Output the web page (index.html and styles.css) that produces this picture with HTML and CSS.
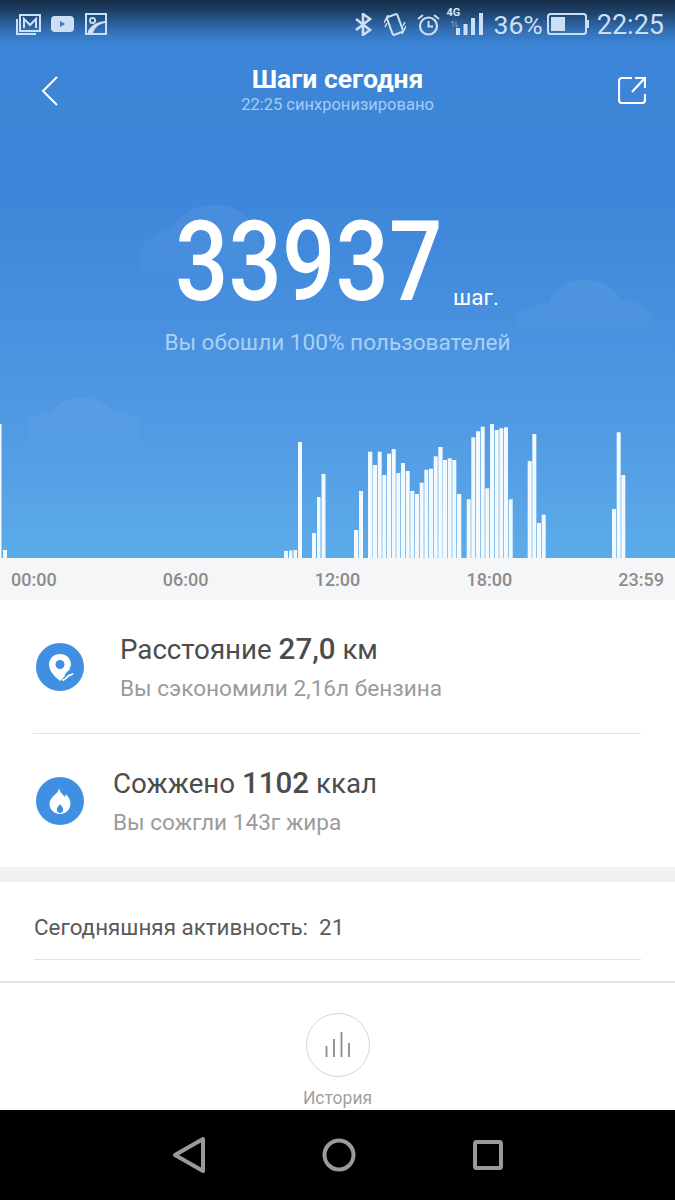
FILE: index.html
```html
<!DOCTYPE html>
<html lang="ru">
<head>
<meta charset="utf-8">
<title>Шаги сегодня</title>
<link rel="stylesheet" href="styles.css">
</head>
<body>
<div class="phone">
  <section class="hero">
    <svg class="clouds" viewBox="0 0 675 558" aria-hidden="true">
      <defs>
        <linearGradient id="cloudFade" x1="0" y1="0" x2="0" y2="1">
          <stop offset="0" stop-color="#fff" stop-opacity=".06"/>
          <stop offset=".55" stop-color="#fff" stop-opacity=".03"/>
          <stop offset="1" stop-color="#fff" stop-opacity="0"/>
        </linearGradient>
      </defs>
      <path class="cloud" d="M140 290V258c0-14 12-26 30-28 8-15 24-25 44-25 20 0 36 10 42 27 3 6 7 14 7 26v32z"/>
      <path class="cloud" d="M517 340V322c0-10 12-18 32-19 5-14 18-23 35-23 17 0 30 8 37 20 20 1 34 10 34 24v16z"/>
      <path class="cloud" d="M28 448V426c0-7 10-13 24-14 5-8 15-14 30-14 14 0 25 6 30 13 16 1 28 7 28 15v22z"/>
    </svg>

    <div class="status">
      <div class="status-group">
        <svg class="si" width="25" height="22" viewBox="0 0 25 22"><path d="M4 2h20v16H4z" fill="none" stroke="currentColor" stroke-width="2"/><path d="M8 15V6l6 6 6-6v9" fill="none" stroke="currentColor" stroke-width="2"/><path d="M1 6v15h19" fill="none" stroke="currentColor" stroke-width="2"/></svg>
        <svg class="si si-yt" width="23" height="16" viewBox="0 0 23 16"><rect width="23" height="16" rx="4" fill="currentColor"/><path d="M9 5l5 3-5 3z" fill="#3b78b8"/></svg>
        <svg class="si si-pic" width="22" height="22" viewBox="0 0 22 22"><rect x="1" y="1" width="20" height="20" fill="none" stroke="currentColor" stroke-width="2"/><circle cx="7.500" cy="7.500" r="2.600" fill="none" stroke="currentColor" stroke-width="1.800"/><path d="M3 18C7 11 13 9 20 8v2C14 11 10 14 8 20H3z" fill="currentColor"/></svg>
      </div>
      <div class="status-group status-right">
        <svg width="19" height="23" viewBox="0 0 19 23"><path d="M2 6l14 11-7 5V1l7 5L2 17" fill="none" stroke="currentColor" stroke-width="2.600"/></svg>
        <svg class="si-vib" width="22" height="23" viewBox="0 0 22 23"><rect x="5.500" y="2" width="11" height="19" rx="1.500" transform="rotate(-20 11 11.500)" fill="none" stroke="currentColor" stroke-width="2"/><path d="M0 10l4-8M1 14l2-4M18 21l4-8M19 13l2-4" stroke="currentColor" stroke-width="1.500" fill="none"/></svg>
        <svg class="si-alarm" width="23" height="23" viewBox="0 0 23 23"><circle cx="11.500" cy="13" r="8.500" fill="none" stroke="currentColor" stroke-width="2.200"/><path d="M11.500 8v5.500H16M1 6l5-4M22 6l-5-4" fill="none" stroke="currentColor" stroke-width="2"/></svg>
        <div class="signal">
          <span class="net">4G</span>
          <svg width="27" height="22" viewBox="0 0 27 22"><path d="M-3 14V8l-2 2M0 8v6l2-2" fill="none" stroke="currentColor" stroke-width="1" opacity=".5"/><rect x="0" y="15" width="4" height="7" fill="currentColor"/><rect x="7.500" y="11" width="4" height="11" fill="currentColor"/><rect x="15" y="5" width="4" height="17" fill="currentColor"/><rect x="23" y="0" width="4" height="22" fill="currentColor"/></svg>
        </div>
        <span class="pct">36%</span>
        <svg class="batt" width="42" height="22" viewBox="0 0 42 22"><rect x="1" y="1" width="38" height="20" rx="2.500" fill="none" stroke="currentColor" stroke-width="2"/><rect x="4" y="4" width="14" height="14" fill="currentColor"/><rect x="40" y="7" width="2" height="8" fill="currentColor"/></svg>
        <span class="clock">22:25</span>
      </div>
    </div>

    <header class="toolbar">
      <svg class="tool-icon" width="18" height="30" viewBox="0 0 18 30"><path d="M16 1L2 15l14 14" fill="none" stroke="#fff" stroke-width="2"/></svg>
      <div class="heading">
        <h1 class="title">Шаги сегодня</h1>
        <p class="sync">22:25 синхронизировано</p>
      </div>
      <svg class="tool-icon" width="28" height="28" viewBox="0 0 28 28"><path d="M14 2H4a3 3 0 0 0-3 3v19a3 3 0 0 0 3 3h20a3 3 0 0 0 3-3v-6" fill="none" stroke="#fff" stroke-width="2.200"/><path d="M14 16L26 3M17 2h10v10" fill="none" stroke="#fff" stroke-width="2.200"/></svg>
    </header>

    <div class="steps">
      <span class="steps-num">33937</span>
      <span class="steps-unit">шаг.</span>
    </div>
    <p class="rank">Вы обошли 100% пользователей</p>

    <svg class="chart" width="675" height="136" viewBox="0 422 675 136" aria-label="Шаги по времени">
      <g class="bars">
        <rect x="0" y="424" width="1.500" height="134"/><rect x="3" y="550" width="4" height="8"/>
        <rect x="284" y="551" width="4" height="7"/><rect x="289" y="550.500" width="3.500" height="7.500"/><rect x="293.500" y="550" width="3.500" height="8"/><rect x="298" y="442" width="4" height="116"/>
        <rect x="312" y="533" width="4" height="25"/><rect x="317" y="497" width="3.500" height="61"/><rect x="321.500" y="474" width="4" height="84"/>
        <rect x="354" y="530" width="4.300" height="28"/><rect x="359" y="491" width="4" height="67"/>
        <rect x="368" y="451.700" width="4.300" height="106.300"/><rect x="372.700" y="465" width="4.300" height="93"/><rect x="377.700" y="451.700" width="4" height="106.300"/><rect x="382.300" y="475" width="4" height="83"/>
        <rect x="387" y="453.700" width="4" height="104.300"/><rect x="391.700" y="449" width="4" height="109"/><rect x="396.300" y="473" width="4" height="85"/><rect x="401" y="463" width="4" height="95"/>
        <rect x="405.700" y="471" width="4" height="87"/><rect x="410.300" y="491" width="4" height="67"/><rect x="415" y="494" width="4" height="64"/><rect x="419.700" y="482.700" width="4" height="75.300"/>
        <rect x="424.300" y="469.700" width="4" height="88.300"/><rect x="429" y="468.700" width="4" height="89.300"/><rect x="433.700" y="456.300" width="4" height="101.700"/><rect x="438.300" y="447" width="4.300" height="111"/>
        <rect x="443" y="460" width="4" height="98"/><rect x="447.700" y="458.300" width="4" height="99.700"/><rect x="452.300" y="460" width="4" height="98"/><rect x="457" y="494" width="4.300" height="64"/>
        <rect x="466.700" y="499.300" width="4" height="58.700"/><rect x="471.300" y="437.300" width="4" height="120.700"/><rect x="476" y="431.300" width="4" height="126.700"/><rect x="480.700" y="426.700" width="4" height="131.300"/>
        <rect x="485.300" y="488.300" width="4" height="69.700"/><rect x="490" y="424" width="4" height="134"/><rect x="494.700" y="430" width="4" height="128"/><rect x="499.300" y="428.300" width="4" height="129.700"/>
        <rect x="504" y="427.300" width="4" height="130.700"/><rect x="508.700" y="499.300" width="4" height="58.700"/>
        <rect x="527.700" y="461" width="4" height="97"/><rect x="532.300" y="434" width="4" height="124"/><rect x="537" y="523" width="4" height="35"/><rect x="541.700" y="514.700" width="4" height="43.300"/>
        <rect x="612" y="509" width="4" height="49"/><rect x="616.700" y="432.300" width="4" height="125.700"/><rect x="621.300" y="475" width="4" height="83"/>
      </g>
    </svg>
  </section>

  <div class="axis">
    <span>00:00</span><span>06:00</span><span>12:00</span><span>18:00</span><span>23:59</span>
  </div>

  <section class="stats">
    <div class="stat">
      <svg class="stat-icon" width="48" height="48" viewBox="0 0 48 48">
        <circle cx="24" cy="24" r="24" fill="#3f8fe2"/>
        <path d="M24 11c-6.500 0-11 4.700-11 10.500C13 27.500 18 33 24 38c1.600-1.400 3-2.800 4.400-4.200 1.300-4.300 3-5.600 5-6.800 0-1.700 1.600-3.500 1.600-5.500C35 15.700 30.500 11 24 11z" fill="#fff"/>
        <circle cx="24" cy="21.500" r="4.500" fill="#3f8fe2"/>
        <path d="M27 37c3-.5 3.500-3.200 6-4.500 1.700-.9 2.500-.4 3.500-1.500" fill="none" stroke="#fff" stroke-width="1.800" stroke-linecap="round"/>
      </svg>
      <div class="stat-text">
        <p class="stat-main">Расстояние <b>27,0</b> км</p>
        <p class="stat-sub">Вы сэкономили 2,16л бензина</p>
      </div>
    </div>
    <div class="stat stat-burn">
      <svg class="stat-icon" width="48" height="48" viewBox="0 0 48 48">
        <circle cx="24" cy="24" r="24" fill="#3f8fe2"/>
        <path d="M23 11c1 4.500 4 6.500 6 9 .5-1 .8-2 .8-3 2.700 2.800 4.700 6 4.700 9.500C34.500 32.500 30 37 24 37s-10.500-4.500-10.500-10c0-3.800 2.200-6.300 4.500-8.500 2.300-2.200 5-4 5-7.500z" fill="#fff"/>
        <path d="M24 27c1 2 3.200 3 3.200 5.800 0 2-1.500 3.200-3.200 3.200s-3.200-1.200-3.200-3.200c0-2.600 2.200-3.800 3.200-5.800z" fill="#3f8fe2"/>
      </svg>
      <div class="stat-text">
        <p class="stat-main">Сожжено <b>1102</b> ккал</p>
        <p class="stat-sub">Вы сожгли 143г жира</p>
      </div>
    </div>
  </section>

  <section class="activity">
    <p class="activity-row">Сегодняшняя активность:&nbsp; 21</p>
  </section>

  <footer class="history">
    <div class="history-btn">
      <svg class="history-bars" width="26" height="25" viewBox="0 0 26 25"><path d="M1.500 14v11M9 7v18M16.500 0v25M24 11v14" fill="none" stroke="#8a8a8a" stroke-width="1.800"/></svg>
    </div>
    <span class="history-label">История</span>
  </footer>

  <nav class="navbar">
    <svg width="34" height="38" viewBox="0 0 34 38"><path d="M31 3L3 19l28 16z" fill="none" stroke="#9a9a9a" stroke-width="4" stroke-linejoin="round"/></svg>
    <svg width="34" height="34" viewBox="0 0 34 34"><circle cx="17" cy="17" r="14.500" fill="none" stroke="#9a9a9a" stroke-width="4"/></svg>
    <svg width="30" height="30" viewBox="0 0 30 30"><rect x="2" y="2" width="26" height="26" rx="1.500" fill="none" stroke="#9a9a9a" stroke-width="4"/></svg>
  </nav>
</div>
</body>
</html>
```

FILE: styles.css
```css
* { box-sizing: border-box; }

html, body {
  margin: 0;
  padding: 0;
  background: #fff;
}

p, h1 { margin: 0; font-weight: inherit; }

.phone {
  width: 675px;
  height: 1200px;
  overflow: hidden;
  display: flex;
  flex-direction: column;
  font-family: Roboto, "Noto Sans", sans-serif;
}

/* Blue sky panel */
.hero {
  position: relative;
  height: 558px;
  flex: none;
  display: flex;
  flex-direction: column;
  background:
    linear-gradient(to bottom, #142c47 0, rgba(20, 44, 71, .75) 12px, rgba(20, 44, 71, .25) 30px, rgba(20, 44, 71, 0) 44px),
    linear-gradient(to bottom, #3b84d6 0, #3d86d9 200px, #4f97e2 400px, #5cabe9 558px);
}

.clouds {
  position: absolute;
  inset: 0;
  width: 675px;
  height: 558px;
}

.cloud { fill: url(#cloudFade); }

.status {
  position: relative;
  height: 46px;
  padding: 0 11px 0 16px;
  display: flex;
  justify-content: space-between;
  align-items: flex-start;
  color: #cddff2;
}

.status-group {
  display: flex;
  align-items: flex-start;
  padding-top: 13px;
}

.si-yt { margin: 3px 0 0 10px; }
.si-pic { margin-left: 11px; }

.status-right svg { flex: none; }
.si-vib { margin-left: 11px; }
.si-alarm { margin-left: 11px; }

.signal {
  position: relative;
  margin-left: 16px;
}

.signal svg { display: block; overflow: visible; }

.net {
  position: absolute;
  left: -9px;
  top: -6px;
  font-size: 11px;
  line-height: 11px;
  font-weight: 700;
  color: #d8e6f5;
}

.pct, .clock {
  line-height: 24px;
}

.pct { margin-left: 11px; font-size: 26.500px; }
.batt { margin-left: 4px; }
.clock { margin-left: 8px; font-size: 27px; }

.toolbar {
  position: relative;
  height: 72px;
  display: flex;
  align-items: flex-start;
  justify-content: space-between;
  padding: 30px 29px 0 41px;
}

.tool-icon { flex: none; }

.heading {
  position: absolute;
  left: 0;
  right: 0;
  top: 18px;
  text-align: center;
}

.title {
  color: #fff;
  font-size: 26.500px;
  line-height: 30px;
  font-weight: 700;
}

.sync {
  color: #a7cbf0;
  font-size: 16.500px;
  line-height: 22px;
}

.steps {
  position: relative;
  height: 114px;
  margin-top: 87px;
  padding-left: 177px;
  display: flex;
  align-items: flex-end;
  color: #fff;
}

.steps-num {
  display: block;
  width: 266px;
  font-size: 112px;
  font-weight: 500;
  line-height: 114px;
  white-space: nowrap;
  transform: scaleX(.84);
  transform-origin: 0 50%;
  margin-left: -2px;
  margin-right: 2px;
}

.steps-unit {
  margin: 0 0 10px 10px;
  font-size: 22.500px;
  line-height: 24px;
  display: block;
}

.rank {
  position: relative;
  margin-top: 10px;
  text-align: center;
  color: #a9d0f4;
  font-size: 22.600px;
  line-height: 28px;
}

.chart {
  position: relative;
  margin-top: auto;
  display: block;
}

.bars { fill: #f3faff; }

/* Time axis under the chart */
.axis {
  height: 42px;
  flex: none;
  padding: 0 11px;
  display: flex;
  justify-content: space-between;
  align-items: center;
  background: #f5f6f8;
  color: #8c8c8c;
  font-size: 18px;
  font-weight: 500;
}

.stats {
  flex: none;
  height: 267px;
  padding: 0 34px 0 33px;
  background: #fff;
}

.stat {
  height: 134px;
  display: flex;
  align-items: center;
  border-bottom: 1px solid #e2e2e2;
}

.stat-burn {
  height: 133px;
  border-bottom: 0;
}

.stat-icon {
  flex: none;
  margin-left: 3px;
}

.stat-text { margin-left: 36px; }
.stat-burn .stat-text { margin-left: 29px; }

.stat-main {
  color: #4c4c4c;
  font-size: 27.700px;
  line-height: 36px;
}

.stat-main b { font-weight: 500; font-size: 29.500px; }

.stat-sub {
  margin-top: 7px;
  color: #9b9b9b;
  font-size: 22.600px;
  line-height: 28px;
}

.activity {
  flex: none;
  margin-top: 15px;
  height: 101px;
  padding: 0 34px;
  background: #fff;
  box-shadow: 0 -15px 0 #f0f1f3;
  border-bottom: 2px solid #e4e4e4;
}

.activity-row {
  height: 78px;
  padding-top: 12px;
  display: flex;
  align-items: center;
  border-bottom: 1px solid #e2e2e2;
  color: #5a5a5a;
  font-size: 22.400px;
}

.history {
  flex: none;
  height: 127px;
  display: flex;
  flex-direction: column;
  align-items: center;
  padding-top: 30px;
  background: #fff;
}

.history-btn {
  flex: none;
  width: 64px;
  height: 64px;
  border: 1.500px solid #d5d5d5;
  border-radius: 50%;
  display: flex;
  align-items: center;
  justify-content: center;
}

.history-bars { margin-bottom: 2px; }

.history-label {
  margin-top: 10px;
  color: #a0a0a0;
  font-size: 17.500px;
  line-height: 23px;
}

/* Android navigation bar */
.navbar {
  flex: none;
  height: 90px;
  background: #000;
  display: flex;
  align-items: center;
  padding-left: 172px;
}

.navbar svg:nth-child(2) { margin-left: 116px; }
.navbar svg:nth-child(3) { margin-left: 117px; }
```
